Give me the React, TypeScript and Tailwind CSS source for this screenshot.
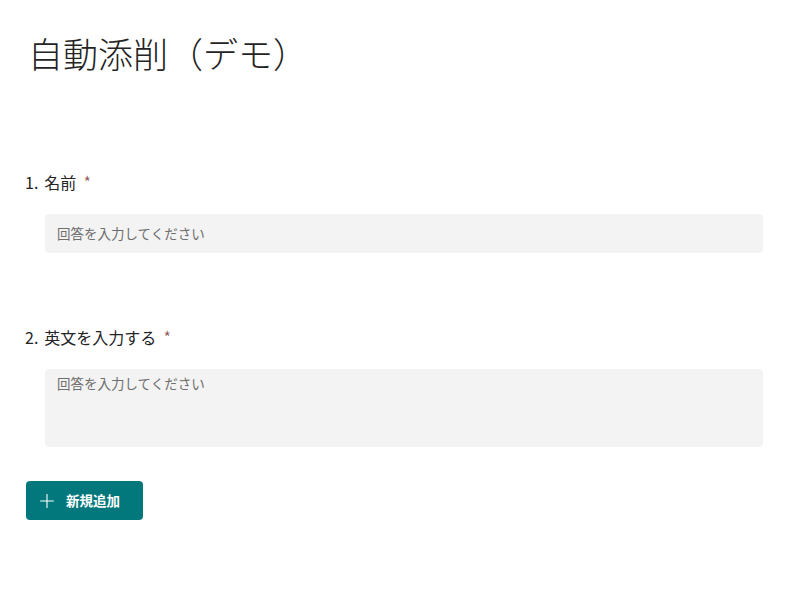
import { Plus } from 'lucide-react';

const font = { fontFamily: '"Noto Sans CJK JP", "Noto Sans", sans-serif' };

function Question({ no, label, tall }: { no: number; label: string; tall?: boolean }) {
  return (
    <div className="flex flex-col">
      <div className="flex items-center text-[16px] leading-[24px] text-[#242424]">
        <span className="mr-[6px]">{no}.</span>
        <span>{label}</span>
        <span className="ml-[7px] text-[18px] font-light leading-[24px] text-[#8a4a4a]">*</span>
      </div>
      <div
        className={`ml-[20px] mt-[20px] rounded-[4px] bg-[#f3f3f3] px-[12px] text-[13.5px] text-[#6e6e6e] ${
          tall ? 'h-[78px] pt-[4px]' : 'flex h-[39px] items-center'
        }`}
      >
        回答を入力してください
      </div>
    </div>
  );
}

export default function App() {
  return (
    <div className="h-[612px] w-[800px] bg-white pl-[25px] pr-[37px]" style={font}>
      <h1 className="pl-[3px] pt-[28px] text-[35px] font-light leading-[50px] text-[#242424]">自動添削（デモ）</h1>
      <div className="mt-[92px] flex flex-col gap-[72px]">
        <Question no={1} label="名前" />
        <Question no={2} label="英文を入力する" tall />
      </div>
      <button
        type="button"
        className="ml-[1px] mt-[34px] flex h-[39px] w-[117px] items-center gap-[8px] rounded-[4px] bg-[#03787c] pl-[10px] text-[13.5px] font-bold text-white"
      >
        <Plus size={22} strokeWidth={1.2} />
        新規追加
      </button>
    </div>
  );
}
